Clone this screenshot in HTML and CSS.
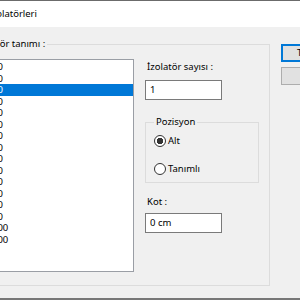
FILE: index.html
```html
<!DOCTYPE html>
<html lang="tr">
<head>
<meta charset="utf-8">
<link rel="stylesheet" href="styles.css">
</head>
<body>
<div class="window">
  <div class="titlebar">İzolatörleri</div>
  <div class="client">
    <fieldset class="group main">
      <legend>İzolatör tanımı :</legend>
      <div class="main-inner">
        <ul class="listbox">
          <li>Tip 300</li>
          <li>Tip 350</li>
          <li class="selected">Tip 400</li>
          <li>Tip 450</li>
          <li>Tip 500</li>
          <li>Tip 550</li>
          <li>Tip 600</li>
          <li>Tip 650</li>
          <li>Tip 700</li>
          <li>Tip 750</li>
          <li>Tip 800</li>
          <li>Tip 850</li>
          <li>Tip 900</li>
          <li>Tip 950</li>
          <li>Tip 1000</li>
          <li>Tip 1100</li>
        </ul>
        <div class="side">
          <div class="lbl first">İzolatör sayısı :</div>
          <div class="input">1</div>
          <fieldset class="group pos">
            <legend>Pozisyon</legend>
            <div class="radio checked"><span class="circle"></span>Alt</div>
            <div class="radio"><span class="circle"></span>Tanımlı</div>
          </fieldset>
          <div class="lbl kot">Kot :</div>
          <div class="input kot-input">0 cm</div>
        </div>
      </div>
    </fieldset>
    <div class="buttons">
      <div class="btn default">Tamam</div>
      <div class="btn">İptal</div>
    </div>
  </div>
  <div class="bottom"></div>
</div>
</body>
</html>
```
FILE: styles.css
```css
html, body {
  margin: 0;
  padding: 0;
  width: 300px;
  height: 300px;
  overflow: hidden;
  background: #f0f0f0;
  font-family: "Noto Sans", "Open Sans", sans-serif;
  font-size: 9.5px;
  color: #000;
}

.window {
  width: 420px;
  margin-left: -60px;
}

.titlebar {
  height: 26px;
  line-height: 26px;
  border-top: 1px solid #6b6b6b;
  background: #fff;
  padding-left: 48.5px;
}

.client {
  height: 271px;
  background: #f0f0f0;
  display: flex;
  align-items: flex-start;
  box-sizing: border-box;
}

.group {
  border: 1px solid #dcdcdc;
  margin: 0;
  min-width: 0;
}

.group legend {
  line-height: 14px;
  padding: 0 2px;
}

.main {
  margin-top: 10px;
  margin-left: 25px;
  padding: 8px 10px 13px 7px;
}

.main-inner {
  display: flex;
  gap: 11px;
}

.listbox {
  list-style: none;
  margin: 0;
  padding: 1px 0 0 0;
  width: 161px;
  height: 213px;
  box-sizing: border-box;
  background: #fff;
  border: 1px solid #9a9ea5;
}

.listbox li {
  line-height: 11.5px;
  height: 11.5px;
  padding-left: 2px;
  text-indent: -5.5px;
  white-space: nowrap;
}

.listbox li.selected {
  background: #0078d7;
  color: #fff;
}

.side {
  width: 114px;
}

.lbl {
  line-height: 14px;
  padding-left: 2px;
}

.lbl.first {
  margin-top: 1px;
}

.input {
  margin-top: 6px;
  width: 77px;
  height: 20px;
  box-sizing: border-box;
  border: 1px solid #7a7a7a;
  background: #fff;
  line-height: 18px;
  padding-left: 4px;
}

.pos {
  margin-top: 15px;
  padding: 5px 8px 6px 8px;
}

.radio {
  display: flex;
  align-items: center;
  gap: 2px;
  height: 14px;
  line-height: 14px;
}

.radio + .radio {
  margin-top: 14px;
}

.circle {
  width: 12px;
  height: 12px;
  box-sizing: border-box;
  border: 1px solid #333;
  border-radius: 50%;
  background: #fff;
}

.radio.checked .circle {
  background: radial-gradient(circle, #333 0 3px, #fff 3.5px);
}

.lbl.kot {
  margin-top: 12px;
}

.input.kot-input {
  margin-top: 4px;
}

.buttons {
  margin-top: 17px;
  margin-left: 11px;
  display: flex;
  flex-direction: column;
  gap: 5px;
}

.btn {
  width: 65px;
  height: 18px;
  box-sizing: border-box;
  border: 1px solid #adadad;
  background: #e1e1e1;
  text-align: center;
  line-height: 16px;
}

.btn.default {
  border: 2px solid #0078d7;
  line-height: 14px;
}

.bottom {
  height: 3px;
  background: #777;
}
```
